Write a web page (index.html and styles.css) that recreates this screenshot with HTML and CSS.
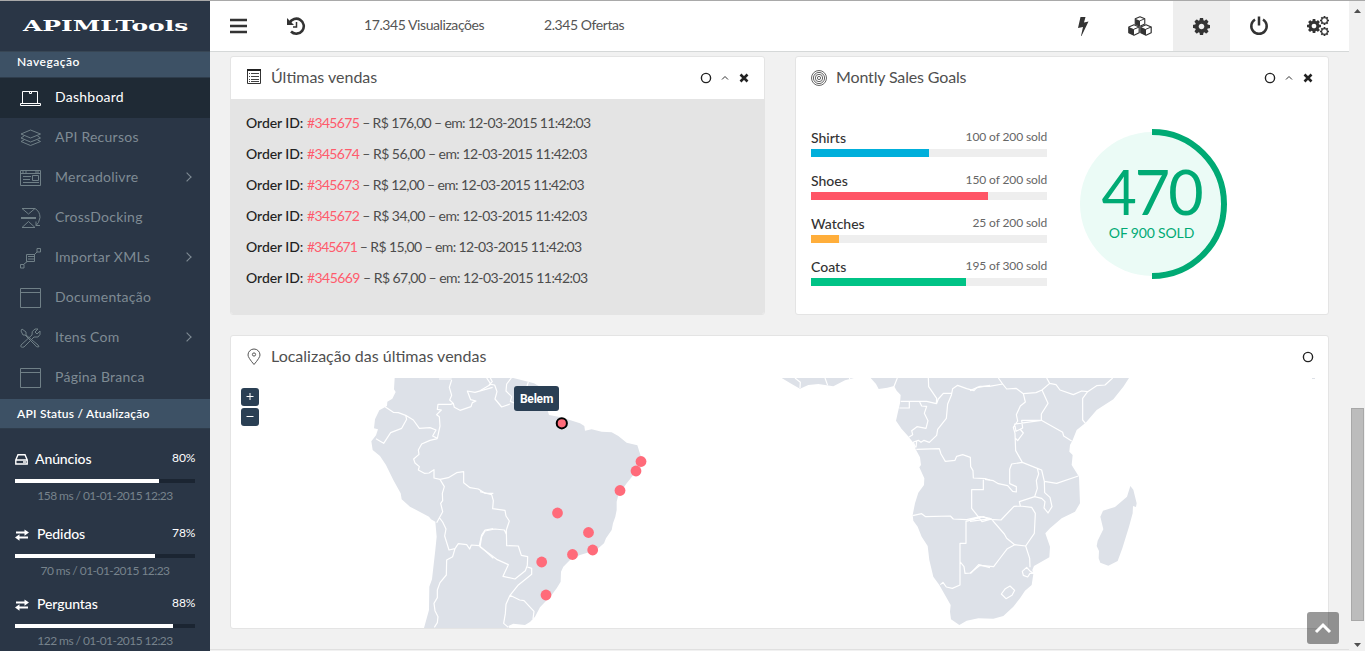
FILE: index.html
```html
<!DOCTYPE html>
<html lang="pt-BR">
<head>
<meta charset="utf-8">
<title>APIMLTools</title>
<link rel="stylesheet" href="styles.css">
</head>
<body>
<svg class="defs" width="0" height="0">
  <symbol id="gear" viewBox="0 -1408 1536 1536"><path fill-rule="evenodd" transform="scale(1 -1)" d="M1024 640q0 -106 -75 -181t-181 -75t-181 75t-75 181t75 181t181 75t181 -75t75 -181zM1536 749v-222q0 -12 -8 -23t-20 -13l-185 -28q-19 -54 -39 -91q35 -50 107 -138q10 -12 10 -25t-9 -23q-27 -37 -99 -108t-94 -71q-12 0 -26 9l-138 108q-44 -23 -91 -38q-16 -136 -29 -186q-7 -28 -36 -28h-222q-14 0 -24.5 8.5t-11.5 21.5l-28 184q-49 16 -90 37l-141 -107q-10 -9 -25 -9q-14 0 -25 11q-126 114 -165 168q-7 10 -7 23q0 12 8 23q15 21 51 66.5t54 70.5q-27 50 -41 99l-183 27q-13 2 -21 12.5t-8 23.5v222q0 12 8 23t19 13l186 28q14 46 39 92q-40 57 -107 138q-10 12 -10 24q0 10 9 23q26 36 98.5 107.5t94.5 71.5q13 0 26 -10l138 -107q44 23 91 38q16 136 29 186q7 28 36 28h222q14 0 24.5 -8.5t11.5 -21.5l28 -184q49 -16 90 -37l142 107q9 9 24 9q13 0 25 -10q129 -119 165 -170q7 -8 7 -22q0 -12 -8 -23q-15 -21 -51 -66.5t-54 -70.5q26 -50 41 -98l183 -28q13 -2 21 -12.5t8 -23.5z"/></symbol>
  <symbol id="cube" viewBox="0 0 12 12"><path fill="#fff" stroke="#333" stroke-width="1.2" stroke-linejoin="round" d="M.8 3 6 .8 11.2 3v5.8L6 11.2.8 8.8z"/><path fill="#333" d="M.8 3 6 5.2v6L.8 8.8z"/><path fill="none" stroke="#333" d="M6 5.2 11.2 3"/></symbol>
  <symbol id="window" viewBox="0 0 22 20"><path d="M.5.5h20v19H.5zM.5 4.5h20"/></symbol>
  <symbol id="swap" viewBox="0 0 15 12"><path fill="#fff" d="M1 2.500h8.500V.4L14 3.600 9.500 6.800V4.600H1zM13 7.400H4.500V5.300L0 8.600l4.500 3.200V9.500H13z"/></symbol>
  <symbol id="ring" viewBox="0 0 12 12"><circle cx="6" cy="6" r="4.600" fill="none" stroke="#222" stroke-width="1.400"/></symbol>
  <symbol id="up" viewBox="0 0 8 6"><path d="M1 4.500 4 1.500l3 3" fill="none" stroke="#333"/></symbol>
  <symbol id="cross" viewBox="0 0 10 10"><path d="m1.500 1.500 7 7m0-7-7 7" fill="none" stroke="#222" stroke-width="2.600"/></symbol>
</svg>
<div class="app">
  <aside class="sidebar">
    <div class="logo"><span>APIMLTools</span></div>
    <h2 class="band">Navegação</h2>
    <nav>
      <a class="item active"><svg width="22" height="20"><path d="M2.500 15.500V3.500h15v12M.5 15.500h20v2H.5zM9.500 4v1.500h2V4"/></svg><span>Dashboard</span></a>
      <a class="item"><svg width="22" height="20"><path d="m1 6 9.500-4 10 4-10 4zM4 8l-3 2 9.500 4 10-4-3-2M4 12l-3 1.500 9.500 4 10-4-3-1.500"/></svg><span>API Recursos</span></a>
      <a class="item"><svg width="22" height="20"><path d="M.5 2.500h20v15H.5zM.5 5.500h20M2 4h2m1 0h2m8 0h4M3 8.500h8M3 11.500h7M3 14.500h16M12.500 7.500h6v5h-6z"/></svg><span>Mercadolivre</span><i class="arrow"></i></a>
      <a class="item"><svg width="22" height="22"><path d="M2 1.500h13L8.500 7zM2 20.500h13l-6.500-6zM1 10.500h15M1 11.500h15M15 1.500q5 3 5 9-1 6-4 8m0-4v4h4"/></svg><span>CrossDocking</span></a>
      <a class="item"><svg width="22" height="22"><path d="M17 1.500h3.500V5H17zM.5 17.500H4V21H.5zM4 17l4-3m6-6 3-3M6.500 7.500h8v7h-8zM8 9.500h6M8 12h6"/></svg><span>Importar XMLs</span><i class="arrow"></i></a>
      <a class="item"><svg width="22" height="20"><use href="#window"/></svg><span>Documentação</span></a>
      <a class="item"><svg width="22" height="20"><path d="m2 1 4 3v3l12 10q2 2 0 2t-3-2L5 7H3L1 3zM1 17 12 7q-1-4 3-6h3l-3 3 2 2 3-3q1 4-2 6h-4L4 19q-4 1-3-2"/></svg><span>Itens Com</span><i class="arrow"></i></a>
      <a class="item"><svg width="22" height="20"><use href="#window"/></svg><span>Página Branca</span></a>
    </nav>
    <h2 class="band status-title">API Status / Atualização</h2>
    <section class="status first">
      <div class="status-head"><svg width="14" height="12"><path d="M.8 6 3 .8h7L12.200 6v4H.8zM.8 6h11.400M8 8h3" fill="none" stroke="#fff" stroke-width="1.400"/></svg><span class="name first-name">Anúncios</span><span class="pct">80%</span></div>
      <div class="track"><div class="fill" style="width:80%"></div></div>
      <p>158 ms / 01-01-2015 12:23</p>
    </section>
    <section class="status">
      <div class="status-head"><svg width="15" height="12"><use href="#swap"/></svg><span class="name">Pedidos</span><span class="pct">78%</span></div>
      <div class="track"><div class="fill" style="width:78%"></div></div>
      <p>70 ms / 01-01-2015 12:23</p>
    </section>
    <section class="status">
      <div class="status-head"><svg width="15" height="12"><use href="#swap"/></svg><span class="name">Perguntas</span><span class="pct">88%</span></div>
      <div class="track"><div class="fill" style="width:88%"></div></div>
      <p>122 ms / 01-01-2015 12:23</p>
    </section>
  </aside>

  <div class="page">
    <header class="topbar">
      <a class="tool"><svg width="18" height="16"><path d="M0 2h17M0 8h17M0 14h17" stroke="#333" stroke-width="2.700"/></svg></a>
      <a class="tool"><svg width="20" height="19"><path d="M3.500 6A7.500 7.500 0 1 1 5 14.500" fill="none" stroke="#333" stroke-width="2.600"/><path d="M1 1v7h7z" fill="#333"/><path d="M10.500 5v5H7" fill="none" stroke="#333" stroke-width="1.500"/></svg></a>
      <span class="stat views">17.345 Visualizações</span>
      <span class="stat">2.345 Ofertas</span>
      <div class="tools">
        <a class="tool bolt"><svg width="12" height="19"><path d="M3.500 0h5L7 5.500l4.500-1L4.500 19H4l2-9-5 1z" fill="#333"/></svg></a>
        <a class="tool cubes"><svg width="26" height="20"><use href="#cube" x="7" y="0" width="12" height="11"/><use href="#cube" x="1" y="8" width="12" height="12"/><use href="#cube" x="13" y="8" width="12" height="12"/></svg></a>
        <a class="tool selected"><svg width="17" height="17" fill="#333"><use href="#gear"/></svg></a>
        <a class="tool"><svg width="20" height="20"><path d="M6 3.500A7.700 7.700 0 1 0 14 3.500M10 .5v9" fill="none" stroke="#333" stroke-width="2.500"/></svg></a>
        <a class="tool cogs"><svg width="22" height="20" fill="#333"><use href="#gear" x="0" y="3" width="14" height="14"/><use href="#gear" x="13" y="0" width="9" height="9"/><use href="#gear" x="13" y="11" width="9" height="9"/><g fill="#fff"><circle cx="17.500" cy="4.500" r="2.300"/><circle cx="17.500" cy="15.500" r="2.300"/></g></svg></a>
      </div>
    </header>

    <main>
      <div class="row">
        <section class="card">
          <div class="card-head">
            <svg class="list" width="16" height="18"><path d="M1.500 1.500h13v14h-13z" fill="none" stroke="#333"/><path d="M1 2h14" stroke="#222" stroke-width="2"/><path d="M3 5.500h1m1 0h8M3 8.500h1m1 0h8M3 11.500h1m1 0h8M3 13.500h1m1 0h8" stroke="#444"/></svg>
            <h3>Últimas vendas</h3>
            <svg width="12" height="12"><use href="#ring"/></svg><svg class="fold" width="8" height="6"><use href="#up"/></svg><svg width="10" height="10"><use href="#cross"/></svg>
          </div>
          <ul class="orders">
            <li><b>Order ID:</b> <a>#345675</a><span class="wide"> – R$ 176,00 – em: 12-03-2015 11:42:03</span></li>
            <li><b>Order ID:</b> <a>#345674</a><span> – R$ 56,00 – em: 12-03-2015 11:42:03</span></li>
            <li><b>Order ID:</b> <a>#345673</a><span class="tight"> – R$ 12,00 – em: 12-03-2015 11:42:03</span></li>
            <li><b>Order ID:</b> <a>#345672</a><span> – R$ 34,00 – em: 12-03-2015 11:42:03</span></li>
            <li><b>Order ID:</b> <a class="tight-id">#345671</a><span class="tight"> – R$ 15,00 – em: 12-03-2015 11:42:03</span></li>
            <li><b>Order ID:</b> <a class="wide-id">#345669</a><span> – R$ 67,00 – em: 12-03-2015 11:42:03</span></li>
          </ul>
        </section>
        <section class="card">
          <div class="card-head">
            <svg width="17" height="17" fill="none" stroke="#666"><circle cx="8" cy="8" r="7.500"/><circle cx="8" cy="8" r="5.600"/><circle cx="8" cy="8" r="3.700"/><circle cx="8" cy="8" r="1.600"/></svg>
            <h3 class="h-goals">Montly Sales Goals</h3>
            <svg width="12" height="12"><use href="#ring"/></svg><svg class="fold" width="8" height="6"><use href="#up"/></svg><svg width="10" height="10"><use href="#cross"/></svg>
          </div>
          <div class="goals">
            <div class="bars">
              <div class="goal"><div class="goal-text"><b>Shirts</b><small>100 of 200 sold</small></div><div class="bar"><div class="blue" style="width:50%"></div></div></div>
              <div class="goal"><div class="goal-text"><b>Shoes</b><small>150 of 200 sold</small></div><div class="bar"><div class="red" style="width:75%"></div></div></div>
              <div class="goal"><div class="goal-text"><b>Watches</b><small>25 of 200 sold</small></div><div class="bar"><div class="orange" style="width:12%"></div></div></div>
              <div class="goal"><div class="goal-text"><b>Coats</b><small>195 of 300 sold</small></div><div class="bar"><div class="green" style="width:65.700%"></div></div></div>
            </div>
            <div class="dial">
              <svg width="150" height="150"><circle cx="75" cy="75" r="72" fill="#ebfbf6"/><path d="M75 3a72 72 0 0 1 0 144" fill="none" stroke="#00aa74" stroke-width="6"/></svg>
              <div class="dial-text"><strong>470</strong><span>OF 900 SOLD</span></div>
            </div>
          </div>
        </section>
      </div>

      <section class="card map-card">
        <div class="card-head">
          <svg width="16" height="18" fill="none" stroke="#555"><path d="M8 16.500Q2 9.500 2 7a6 6 0 0 1 12 0q0 2.500-6 9.500z"/><circle cx="8" cy="6.500" r="1.600"/></svg>
          <h3>Localização das últimas vendas</h3>
          <svg class="solo" width="12" height="12"><use href="#ring"/></svg>
        </div>
        <div class="map">
          <svg width="1097" height="250" viewBox="231 378 1097 250">
            <g transform="translate(230 330) scale(.33333)">
              <path class="land" d="M494 144 492 178 497 186 487 206 472 215 471 228 448 241 435 268 432 295 444 298 438 316 424 334 428 360 450 378 468 405 490 450 512 490 515 508 540 530 597 560 603 568 616 575 620 620 616 660 606 748 598 770 597 840 582 894H838L835 888 850 881 885 885 900 876 915 860 930 832 965 795 980 775 992 755 993 725 1000 710 1020 690 1050 675 1090 663 1105 655 1122 640 1128 625 1145 600 1149 580 1156 560 1160 540V515L1165 495 1190 460 1210 435 1233 405 1233 380 1222 346 1190 338 1165 318 1145 307 1115 305 1085 298 1065 302 1063 288 1050 280 1012 268 985 260 957 255 930 170 912 160 850 144Z"/>
              <path class="borders" d="M465 230 490 247 505 248 527 256 550 270 568 295 600 293 618 300 608 318 622 325 630 288 628 260 620 254 634 240 622 238 624 223H662L670 220 659 210 665 196 658 172 665 150M527 256 530 268 515 295 482 308 461 340 448 332 438 326M622 326 600 331 575 342 565 360 567 373 551 387 555 399 568 410 565 420 583 430 597 429 612 419V444L630 448 655 443 680 428 701 425V458L720 473 745 477 765 490 790 490M630 448 643 470 637 490 638 512 632 520 638 545 620 578M628 563 638 576 648 597 644 618 657 660 675 656 685 641 710 644 719 657 724 645 748 647 755 615 765 600 790 596M675 656 668 680 650 690 649 735 630 758 622 780V803L612 820 615 842 624 860 622 878 613 892M627 147H665M670 220 673 232 690 241 723 230 727 218 738 213 722 209 712 183 735 187 788 172M748 647 790 685M781 144 787 155 777 165"/>
            </g>
            <g transform="translate(480 370) scale(.33333)">
              <path class="borders" d="M20 24 33 43 0 62M33 43 44 45 51 65 45 87 65 111 90 102M94 24 80 42 78 63 95 80 91 94 103 99M145 36 141 48M0 365 35 374 40 392 38 416 75 421 78 438 88 453 79 480 80 527 115 528 124 556 143 560 142 586 136 602 105 627 69 619 85 584 50 568 0 530 5 500 15 483 45 477 73 480 80 495M140 590 155 595 155 613 115 645 90 676 78 703 76 731 71 760 85 772M90 676 119 690 132 692 162 724 159 747"/>
            </g>
            <g transform="translate(770 370) scale(.33333)">
              <path class="land" d="M35 24 65 42 90 56 115 45 145 42 190 49 225 31 252 24ZM302 24 318 42 326 57 352 53 372 48 380 62 392 75 390 100 383 130 378 152 395 177 412 196 430 218 437 238 450 262 453 285 448 292 463 325 462 345 445 368 435 400 428 435 430 452 443 470 455 500 473 528 478 570 490 620 508 645 525 675 542 705 540 725 543 748 568 765 590 752 625 745 670 746 700 738 730 710 750 685 765 662 785 645 790 612 787 600 792 588 838 562 840 530 826 490 840 475 875 445 915 425 930 400 927 320 905 285 908 255 898 245 900 225 908 210 920 180 947 158 980 120 1030 88 1060 50 1077 24ZM1081 348 1090 359 1100 400 1098 411 1089 408 1088 430 1077 470 1057 535 1043 573 1015 587 991 578 986 565 987 543 980 528 983 512 1000 478 991 440 999 422 1035 411 1071 380Z"/>
              <path class="borders" d="M75 24 91 37 90 54M165 24 173 46M238 24 240 28M382 24 371 52M475 24 476 50 500 85 499 101 470 94H392M388 114H418V96M500 101 505 87 520 70H544M449 96 455 108 470 109 463 130 474 152 468 175 441 170 425 182 428 194 416 202M430 216 445 211 453 217 462 211 478 217 500 196 503 178 529 145 533 102 544 76 548 56 563 46 590 56 612 62 620 53 660 46M439 238 508 236 513 252 526 274 555 271 560 259 578 254 601 262 602 290 609 302 610 324 645 326 660 330M640 329V359H605V415L624 439 636 455 660 448M428 437 455 431 467 440 541 438 550 447 590 449 630 440 660 445M627 444 588 454V520H570V645L547 655 529 651 519 637 511 644M571 576 582 590 585 610 603 609 626 584 660 593M430 216 436 233M440 213 438 232"/>
            </g>
            <g transform="translate(970 370) scale(.33333)">
              <path class="borders" d="M0 62 30 49 58 49 98 42 85 24M98 42 110 57 138 55 160 71 198 68 216 60 239 40 230 24M239 40 258 44 270 60 310 74 335 63 353 65 380 47 405 45 428 24M353 65 338 85V150L347 161M160 71 166 96 151 108 139 134 143 153 130 172 135 190 137 242 157 277 202 295 215 300 223 334 260 340 325 318M216 60 234 100 214 132 214 151 278 187 281 198 305 213M214 151H155L158 174 138 184 134 162ZM150 177 160 189 143 212 137 205M157 277 125 282 119 298V341L139 350V366L128 364 113 347 85 341 70 332 45 328M202 295 206 312 199 332 202 355 194 380 148 395 151 408 185 412 196 430 193 490 167 528 134 524 110 505 103 492 63 446 0 454M194 380 215 385 225 395 222 414 234 429 246 410 240 382 224 368 223 334M151 408 132 409 93 450 60 448 40 440 0 449M167 528 179 565 180 592M190 610H180L173 621 160 616 157 604 170 592 181 604ZM134 524 112 536 86 570 71 590 30 586 0 610M120 648 134 661 126 676 108 686 94 672 106 656Z"/>
            </g>
            <g fill="#ff6b7a">
              <circle cx="641" cy="461.500" r="5.400"/><circle cx="636" cy="471" r="5.400"/><circle cx="620" cy="490.500" r="5.400"/><circle cx="557.500" cy="513" r="5.400"/><circle cx="588.500" cy="532.500" r="5.400"/><circle cx="592.700" cy="550" r="5.400"/><circle cx="572.500" cy="554.500" r="5.400"/><circle cx="541.700" cy="562" r="5.400"/><circle cx="546" cy="595" r="5.400"/><circle cx="561.800" cy="423.300" r="5.100" stroke="#000" stroke-width="2"/>
            </g>
            <path d="M1312 378.500h3" stroke="#dde1e7"/>
          </svg>
          <div class="zoom-in"><svg width="8" height="8"><path d="M.5 3.500h7M4 0v7" stroke="#fff"/></svg></div>
          <div class="zoom-out"><svg width="8" height="8"><path d="M.5 3.500h7" stroke="#fff"/></svg></div>
          <div class="tip">Belem</div>
        </div>
      </section>
      <div class="rule"></div>
      <a class="to-top"><svg width="18" height="12"><path d="m2 10 7-7 7 7" fill="none" stroke="#fff" stroke-width="3"/></svg></a>
    </main>
  </div>
  <div class="scrollbar"><svg width="7" height="4"><path d="M0 4 3.500 0 7 4z" fill="#505050"/></svg><div class="thumb"></div><svg width="7" height="4"><path d="M0 0h7L3.500 4z" fill="#505050"/></svg></div>
</div>
</body>
</html>
```
FILE: styles.css
```css
* { box-sizing: border-box; }
body { margin: 0; font-family: Lato, sans-serif; font-size: 14px; color: #4c4c4c; background: #f1f1f1; overflow: hidden; }
h2, h3, p, ul { margin: 0; padding: 0; font-weight: 400; }
svg { display: block; flex: none; }
.defs { position: absolute; }
.app { display: grid; grid-template-columns: 210px 1139px 16px; height: 651px; border-top: 1px solid #a9a9a9; }

.sidebar { background: #2a3646; overflow: hidden; color: #fff; }
.logo { height: 51px; padding: 15px 0 0 23px; border-bottom: 1px solid #384654; }
.logo span { display: inline-block; font: bold 14px/20px "DejaVu Serif", serif; transform: scaleX(1.78); transform-origin: 0 50%; }
.band { height: 26px; padding-left: 17px; background: #3d5165; font-size: 12px; line-height: 20px; font-weight: 600; letter-spacing: .5px; border-bottom: 1px solid #2e3c4b; }
.status-title { height: 30px; margin-top: 1px; line-height: 29px; letter-spacing: .23px; }
.item { display: flex; align-items: center; height: 40px; padding: 0 19px 0 20px; gap: 13px; color: #7f8b94; letter-spacing: .25px; }
.item svg { fill: none; stroke: #708087; stroke-width: 1; }
.item span { flex: 1; padding-bottom: 4px; }
.item.active { background: #1f2a35; color: #fff; }
.item.active svg { stroke: #fff; }
.arrow { width: 6px; height: 6px; border: solid #7f8b94; border-width: 1px 1px 0 0; transform: rotate(45deg) scale(1.1); margin: 0 1px 2px 0; }
.status { padding: 0 15px; height: 70px; }
.status.first { margin-top: 21px; height: 75px; }
.status-head { display: flex; align-items: center; height: 19px; }
.name { flex: 1; padding: 0 0 2px 7px; font-weight: 500; letter-spacing: -.1px; }
.first-name { padding-left: 6px; }
.pct { font-size: 12px; padding-bottom: 5px; margin-right: -.5px; }
.track { height: 4px; margin-top: 10px; background: #1b2532; }
.fill { height: 4px; background: #fff; }
.status p { margin-top: 5px; font-size: 12px; line-height: 15px; text-align: center; color: #77838c; letter-spacing: -.55px; }

.page { min-width: 0; overflow: hidden; }
.topbar { display: flex; height: 51px; background: #fff; border-bottom: 1px solid #d5d8d8; }
.tool { width: 57px; display: flex; align-items: center; justify-content: center; }
.tool.selected { background: #eee; }
.stat { line-height: 48px; color: #555; letter-spacing: -.42px; }
.views { margin-left: 40px; width: 180px; }
.tools { display: flex; margin-left: auto; padding-right: 5px; }
.tools .bolt { padding-right: 10px; }
.tools .cubes { padding-right: 9px; }
.tools .cogs { padding-left: 4px; }
main { padding: 4px 20px 0; position: relative; height: 599px; }
.row { display: grid; grid-template-columns: 535px 534px; gap: 30px; height: 259px; }
.card { background: #fff; border: 1px solid #e4e4e4; border-radius: 3px; overflow: hidden; }
.card-head { display: flex; align-items: center; height: 42px; padding: 0 15px; }
.card-head h3 { flex: 1; padding: 0 0 3px 9px; font-size: 16px; color: #505050; font-weight: 400; }
.card-head .h-goals { padding-left: 8px; letter-spacing: -.15px; }
.card-head .fold { margin: 0 10px 0 9px; }
.card-head .list { margin-bottom: 2px; }
.card-head .solo { margin-right: -1px; }
.orders { list-style: none; background: #e4e4e4; height: 216px; padding: 8px 15px; }
.orders li { height: 31px; line-height: 31px; white-space: pre; }
.orders b { font-weight: 500; color: #222; letter-spacing: -.05px; }
.orders a { color: #ff5b6c; letter-spacing: -.65px; }
.orders .tight-id { letter-spacing: -1px; }
.orders .wide-id { letter-spacing: -.55px; }
.orders span { letter-spacing: -.53px; }
.orders .wide { letter-spacing: -.64px; }
.orders .tight { letter-spacing: -.61px; }
.goals { display: flex; padding: 27px 15px; }
.bars { width: 236px; padding-top: 3px; }
.goal { height: 43px; }
.goal-text { display: flex; justify-content: space-between; height: 20px; line-height: 18px; }
.goal b { font-weight: 500; color: #333; }
.goal small { font-size: 12px; line-height: 15px; color: #666; letter-spacing: -.12px; }
.bar { height: 8px; background: #eee; }
.bar div { height: 8px; }
.blue { background: #00afdb; }
.red { background: #ff5566; }
.orange { background: #ffae3b; }
.green { background: #00c386; }
.dial { display: grid; margin: 3px 0 0 30px; width: 150px; height: 150px; }
.dial > * { grid-area: 1 / 1; }
.dial-text { display: flex; flex-direction: column; align-items: center; color: #00aa74; padding: 30px 1px 0 0; }
.dial strong { font-size: 61px; line-height: 65px; font-weight: 400; letter-spacing: -2px; }
.dial-text span { line-height: 18px; letter-spacing: -.15px; }
.map-card { margin-top: 20px; height: 294px; }
.map { position: relative; height: 250px; }
.land { fill: #dde1e8; }
.borders { fill: none; stroke: #fff; stroke-width: 3.6; stroke-linejoin: round; }
.zoom-in, .zoom-out { position: absolute; left: 10px; top: 10px; width: 18px; height: 18px; border-radius: 3px; background: #2a3f54; display: flex; align-items: center; justify-content: center; }
.zoom-out { top: 30px; }
.tip { position: absolute; left: 283px; top: 8px; width: 45px; height: 25px; border-radius: 3px; background: #2a3f54; color: #fff; font: bold 12px/26px Roboto, sans-serif; text-align: center; letter-spacing: -.2px; }
.rule { height: 1px; margin: 20px -20px 0; background: #e0e0e0; }
.to-top { position: absolute; left: 1097px; top: 560px; width: 32px; height: 32px; border-radius: 3px; background: rgba(0,0,0,.4); display: flex; align-items: center; justify-content: center; }
.scrollbar { display: flex; flex-direction: column; align-items: center; padding: 8px 0 4px; background: #f1f1f1; }
.thumb { width: 13px; height: 213px; margin: 395px 0 auto 1px; background: #bcbcbc; border: 1px solid #a8a8a8; }
```
